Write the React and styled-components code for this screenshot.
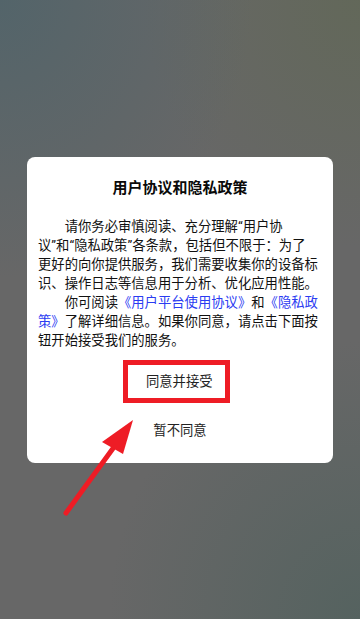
import React from 'react';
import styled, { createGlobalStyle } from 'styled-components';

const GlobalStyle = createGlobalStyle`
  html, body {
    margin: 0;
    padding: 0;
  }
  body {
    font-family: Roboto, "Noto Sans CJK SC", sans-serif;
  }
`;

const Screen = styled.div`
  position: relative;
  width: 360px;
  height: 619px;
  overflow: hidden;
  display: flex;
  align-items: center;
  justify-content: center;
  background:
    radial-gradient(ellipse 70% 45% at 0% 0%, rgba(82, 100, 106, 0.95), rgba(82, 100, 106, 0) 100%),
    radial-gradient(ellipse 60% 40% at 100% 0%, rgba(98, 104, 88, 0.9), rgba(98, 104, 88, 0) 100%),
    radial-gradient(ellipse 70% 45% at 100% 100%, rgba(84, 98, 95, 0.95), rgba(84, 98, 95, 0) 100%),
    #676767;
`;

const Dialog = styled.div`
  width: 306px;
  box-sizing: border-box;
  background: #fff;
  border-radius: 8px;
  padding: 20px 11px 22.5px;
  display: flex;
  flex-direction: column;
  align-items: center;
`;

const Title = styled.h2`
  margin: 0;
  font-size: 15px;
  line-height: 22px;
  font-weight: 700;
  color: #0a0a0a;
`;

const Body = styled.div`
  align-self: stretch;
  margin-top: 18.5px;
  font-size: 13.33px;
  line-height: 19px;
  color: #111;
  white-space: nowrap;
`;

const Paragraph = styled.p`
  margin: 0;
  text-indent: 2em;
`;

const Link = styled.span`
  color: #2b3cf2;
`;

const Highlight = styled.div`
  margin-top: 9.5px;
  margin-right: 7px;
  border: 5px solid #ee1c25;
  width: 107px;
  height: 43px;
  box-sizing: border-box;
  display: flex;
  align-items: center;
  padding: 0 12px 0 17.5px;
`;

const Button = styled.div`
  font-size: 13.33px;
  line-height: 19px;
  color: #222;
  text-align: center;
  flex: 1;
  margin-top: ${(p) => (p.$gap ? '18.5px' : '0')};
  white-space: nowrap;
`;

const Overlay = styled.svg`
  position: absolute;
  inset: 0;
  pointer-events: none;
`;

const Arrow = () => (
  <Overlay width="360" height="619" viewBox="0 0 360 619">
    <line x1="66" y1="513" x2="114" y2="447" stroke="#ee1c25" strokeWidth="5" strokeLinecap="round" />
    <polygon points="133,420 102,442 123,454" fill="#ee1c25" />
  </Overlay>
);

export default function App() {
  return (
    <>
      <GlobalStyle />
      <Screen>
        <Dialog>
          <Title>用户协议和隐私政策</Title>
          <Body>
            <Paragraph>
              请你务必审慎阅读、充分理解“用户协
              <br />
              议”和“隐私政策”各条款，包括但不限于：为了
              <br />
              更好的向你提供服务，我们需要收集你的设备标
              <br />
              识、操作日志等信息用于分析、优化应用性能。
            </Paragraph>
            <Paragraph>
              你可阅读<Link>《用户平台使用协议》</Link>和<Link>《隐私政</Link>
              <br />
              <Link>策》</Link>了解详细信息。如果你同意，请点击下面按
              <br />
              钮开始接受我们的服务。
            </Paragraph>
          </Body>
          <Highlight>
            <Button>同意并接受</Button>
          </Highlight>
          <Button $gap>暂不同意</Button>
        </Dialog>
        <Arrow />
      </Screen>
    </>
  );
}
